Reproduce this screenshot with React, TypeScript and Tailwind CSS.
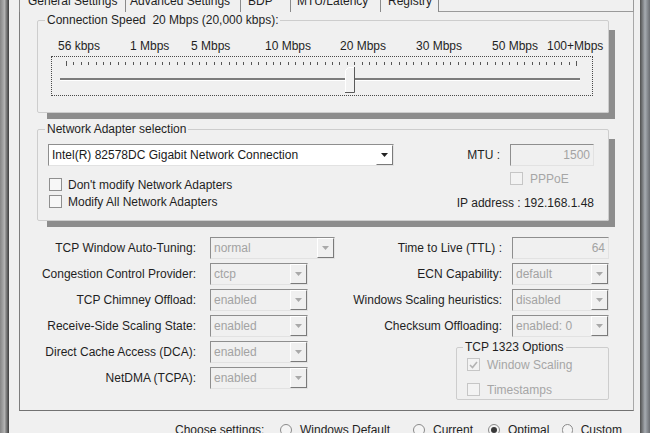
import React from "react";

const ticks = Array.from({ length: 70 }, (_, i) => 14 + (i * 510) / 69);

function Arrow({ dim }: { dim?: boolean }) {
  return (
    <svg width="7" height="4" viewBox="0 0 7 4">
      <path d="M0 0H7L3.5 4Z" fill={dim ? "#a9a9a9" : "#222"} />
    </svg>
  );
}

function Combo({ value, w, enabled }: { value: string; w: string; enabled?: boolean }) {
  return (
    <div
      className={`flex h-[22px] ${w} border border-t-[#8e8e8e] border-l-[#8e8e8e] border-b-[#e2e2e2] border-r-[#e2e2e2] ${
        enabled ? "bg-white text-[#1a1a1a]" : "bg-[#f0f0f0] text-[#a3a3a3]"
      }`}
    >
      <span className="flex-1 pl-[3px] leading-[20px] whitespace-nowrap overflow-hidden">{value}</span>
      <span className="w-[17px] h-full flex items-center justify-center border border-l-white border-t-white border-r-[#7a7a7a] border-b-[#7a7a7a]">
        <Arrow dim={!enabled} />
      </span>
    </div>
  );
}

function TextBox({ value }: { value: string }) {
  return (
    <div className="h-[22px] w-full border border-t-[#8e8e8e] border-l-[#8e8e8e] border-b-[#e2e2e2] border-r-[#e2e2e2] bg-[#f0f0f0] text-[#a3a3a3] text-right pr-[3px] leading-[20px]">
      {value}
    </div>
  );
}

function Check({ label, checked, dim }: { label: string; checked?: boolean; dim?: boolean }) {
  return (
    <div className="flex items-center h-[17px]">
      <span
        className={`w-[13px] h-[13px] flex items-center justify-center border ${
          dim ? "border-[#c6c6c6] bg-[#f3f3f3]" : "border-[#8f8f8f] bg-[#f7f7f7]"
        }`}
      >
        {checked && (
          <svg width="9" height="8" viewBox="0 0 9 8">
            <path d="M1 4L3.5 6.5L8 1" stroke="#b3b3b3" strokeWidth="1.6" fill="none" />
          </svg>
        )}
      </span>
      <span className={`${dim ? "ml-[7px] text-[#a6a6a6]" : "ml-[6px]"} whitespace-nowrap`}>{label}</span>
    </div>
  );
}

function Radio({ label, checked, w }: { label: string; checked?: boolean; w: string }) {
  return (
    <div className={`flex items-center ${w}`}>
      <span className="w-[12px] h-[12px] rounded-full border border-[#8a8a8a] bg-[#f5f5f5] flex items-center justify-center">
        {checked && <span className="w-[6px] h-[6px] rounded-full bg-[#3a3a3a]" />}
      </span>
      <span className="ml-[8px] whitespace-nowrap">{label}</span>
    </div>
  );
}

const leftRows = [
  { label: "TCP Window Auto-Tuning:", value: "normal", w: "w-[125px]" },
  { label: "Congestion Control Provider:", value: "ctcp", w: "w-[98px]" },
  { label: "TCP Chimney Offload:", value: "enabled", w: "w-[98px]" },
  { label: "Receive-Side Scaling State:", value: "enabled", w: "w-[98px]" },
  { label: "Direct Cache Access (DCA):", value: "enabled", w: "w-[98px]" },
  { label: "NetDMA (TCPA):", value: "enabled", w: "w-[98px]" },
];

const rightRows = [
  { label: "ECN Capability:", value: "default" },
  { label: "Windows Scaling heuristics:", value: "disabled" },
  { label: "Checksum Offloading:", value: "enabled: 0" },
];

export default function App() {
  return (
    <div className="w-[650px] h-[433px] overflow-hidden flex bg-[#f0f0f0] text-[12px] leading-[14px] text-[#1f1f1f] font-['Liberation_Sans',Arial,sans-serif]">
      <div className="w-[9px] h-full shrink-0 bg-linear-to-r from-[#858585] via-[#b2b2b2] to-[#3c3c3c]" />

      <div className="w-[631px] shrink-0 flex flex-col">
        {/* tab headers */}
        <div className="flex shrink-0 h-[12px] ml-[10px] mr-[6px]">
          <div className="w-[107px] border-l border-r border-[#8a8a8a] pl-[8px] whitespace-nowrap">
            <div className="-mt-[6px]">General Settings</div>
          </div>
          <div className="w-[115px] border-r border-[#8a8a8a] pl-[4px] whitespace-nowrap">
            <div className="-mt-[6px]">Advanced Settings</div>
          </div>
          <div className="w-[50px] border-r border-[#8a8a8a] pl-[7px]">
            <div className="-mt-[6px]">BDP</div>
          </div>
          <div className="w-[90px] border-r border-[#8a8a8a] pl-[6px] whitespace-nowrap">
            <div className="-mt-[6px]">MTU/Latency</div>
          </div>
          <div className="w-[58px] border-r border-[#8a8a8a] pl-[7px]">
            <div className="-mt-[6px]">Registry</div>
          </div>
          <div className="flex-1 border-b border-r border-[#9a9a9a]" />
        </div>

        {/* tab page */}
        <div className="h-[399px] shrink-0 ml-[10px] mr-[6px] border-l border-r border-b border-l-[#7d7d7d] border-r-[#a8a8a8] border-b-[#727272] flex flex-col">
          <fieldset className="mt-[1px] ml-[17px] w-[572px] border border-[#cdcdcd] rounded-[2px] pb-[16px] shadow-[8px_8px_0_-2px_#8d8d8d]">
            <legend className="ml-[7px] px-[2px]">Connection Speed&nbsp; 20 Mbps (20,000 kbps):</legend>
            <div className="mt-[12px] pl-[20px] flex whitespace-nowrap">
              <span className="w-[72px]">56 kbps</span>
              <span className="w-[61px]">1 Mbps</span>
              <span className="w-[74px]">5 Mbps</span>
              <span className="w-[75px]">10 Mbps</span>
              <span className="w-[76px]">20 Mbps</span>
              <span className="w-[76px]">30 Mbps</span>
              <span className="w-[55px]">50 Mbps</span>
              <span>100+Mbps</span>
            </div>
            <div className="mt-[3px] ml-[13px] w-[542px] h-[40px] border border-dotted border-[#4a4a4a]">
              <svg width="540" height="38" className="block">
                {ticks.map((x, i) => {
                  const long = i === 0 || i === 69;
                  return (
                    <rect key={i} x={Math.round(x)} y={long ? 4 : 5} width="1" height={long ? 5 : 3} fill="#555" />
                  );
                })}
                <rect x="8" y="21" width="520" height="2" fill="#7c7c7c" />
                <rect x="8" y="23" width="520" height="1" fill="#ffffff" />
                <path d="M293 35V13L296 10H302V35Z" fill="#f2f2f2" />
                <path d="M293.5 35V13.5L296.5 10.5H302" stroke="#ffffff" fill="none" />
                <path d="M302.5 10V35.5H293" stroke="#5a5a5a" fill="none" />
              </svg>
            </div>
          </fieldset>

          <fieldset className="mt-[9px] ml-[17px] w-[572px] border border-[#cdcdcd] rounded-[2px] pb-[10px] shadow-[8px_8px_0_-2px_#8d8d8d]">
            <legend className="ml-[7px] px-[2px]">Network Adapter selection</legend>
            <div className="mt-[8px] pl-[10px] pr-[14px] flex">
              <div className="flex flex-col">
                <Combo value="Intel(R) 82578DC Gigabit Network Connection" w="w-[346px]" enabled />
                <div className="mt-[10px] ml-[1px]">
                  <Check label="Don't modify Network Adapters" />
                  <Check label="Modify All Network Adapters" />
                </div>
              </div>
              <div className="ml-auto flex flex-col items-end">
                <div className="flex items-center h-[22px]">
                  <span className="mr-[10px]">MTU :</span>
                  <div className="w-[84px]">
                    <TextBox value="1500" />
                  </div>
                </div>
                <div className="w-[84px] mt-[4px]">
                  <Check label="PPPoE" dim />
                </div>
                <div className="mt-[9px] whitespace-nowrap">IP address : 192.168.1.48</div>
              </div>
            </div>
          </fieldset>

          <div className="mt-[16px] flex">
            <div className="w-[320px] flex flex-col gap-[4px]">
              {leftRows.map((r) => (
                <div key={r.label} className="flex items-center h-[22px]">
                  <span className="w-[176px] text-right whitespace-nowrap">{r.label}</span>
                  <div className="ml-[14px]">
                    <Combo value={r.value} w={r.w} />
                  </div>
                </div>
              ))}
            </div>
            <div className="w-[269px] flex flex-col">
              <div className="flex flex-col gap-[4px]">
                <div className="flex items-center h-[22px]">
                  <span className="w-[162px] text-right whitespace-nowrap">Time to Live (TTL) :</span>
                  <div className="ml-[10px] w-[97px]">
                    <TextBox value="64" />
                  </div>
                </div>
                {rightRows.map((r) => (
                  <div key={r.label} className="flex items-center h-[22px]">
                    <span className="w-[162px] text-right whitespace-nowrap">{r.label}</span>
                    <div className="ml-[10px]">
                      <Combo value={r.value} w="w-[97px]" />
                    </div>
                  </div>
                ))}
              </div>
              <fieldset className="mt-[3px] self-end w-[153px] border border-[#cdcdcd] rounded-[2px] pb-[1px] pl-[10px]">
                <legend className="ml-[-4px] px-[2px]">TCP 1323 Options</legend>
                <div className="mt-[2px]">
                  <Check label="Window Scaling" checked dim />
                </div>
                <div className="mt-[8px]">
                  <Check label="Timestamps" dim />
                </div>
              </fieldset>
            </div>
          </div>
        </div>

        {/* bottom choice row */}
        <div className="mt-[12px] shrink-0 pl-[166px] flex items-center h-[14px]">
          <span className="w-[105px] whitespace-nowrap">Choose settings:</span>
          <Radio label="Windows Default" w="w-[133px]" />
          <Radio label="Current" w="w-[75px]" />
          <Radio label="Optimal" w="w-[74px]" checked />
          <Radio label="Custom" w="w-[60px]" />
        </div>
      </div>

      <div className="w-[10px] h-full shrink-0 bg-linear-to-r from-[#505050] via-[#a6abb1] to-[#6a6d72]" />
    </div>
  );
}
